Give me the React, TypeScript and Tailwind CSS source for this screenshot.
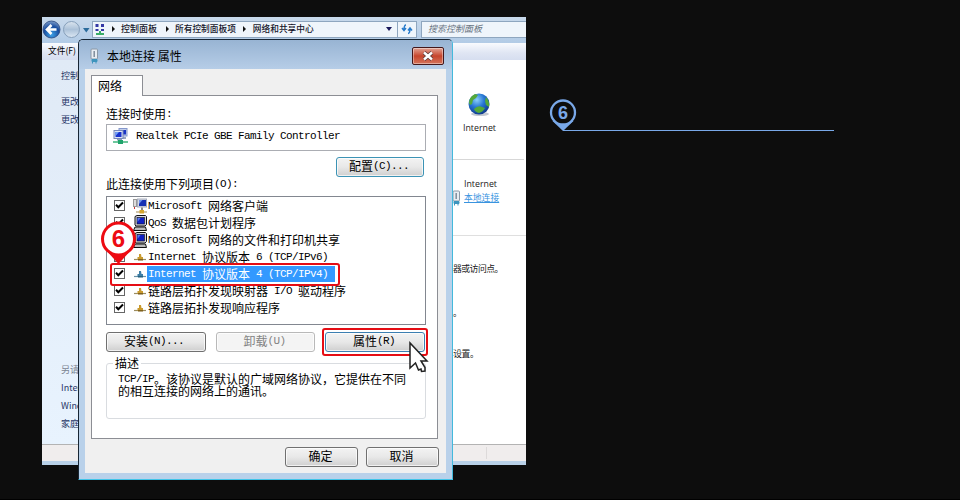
import React from "react";

const CJK = "font-['Noto_Sans_CJK_SC',sans-serif]";

function Song({ text, className = "" }: { text: string; className?: string }) {
  const runs = text.match(/[\x00-\x7f]+|[^\x00-\x7f]+/g) || [];
  return (
    <span className={`inline-flex whitespace-pre text-[12px] leading-[12px] ${className}`}>
      {runs.map((run, i) =>
        run.charCodeAt(0) < 128 ? (
          <span key={i} className="font-['Liberation_Mono',monospace] text-[11px] tracking-[-0.6px]">{run}</span>
        ) : (
          <span key={i} className="font-['Noto_Sans_CJK_SC',sans-serif]">{run}</span>
        )
      )}
    </span>
  );
}

function Button({ label, className = "" }: { label: string; className?: string }) {
  return (
    <button
      className={`flex h-[20px] items-center justify-center rounded-[3px] border bg-linear-to-b from-[#f3f3f3] via-[#e8e8e8] via-50% to-[#cfcfcf] pr-[2px] pb-[2px] inset-ring inset-ring-white/70 ${className}`}
    >
      <Song text={label} />
    </button>
  );
}

function PcIcon() {
  return (
    <svg width="15" height="16" viewBox="0 0 15 16">
      <rect x="6" y="0.5" width="8" height="7.5" fill="#c3cfea" stroke="#8497cc" />
      <rect x="7.5" y="2" width="5.5" height="4.5" fill="#1b35c4" />
      <path d="M10 9h3v2h-3z" fill="#9aa9c4" />
      <rect x="1" y="2.5" width="9" height="8" fill="#dde4f4" stroke="#7788b8" />
      <rect x="2.5" y="4" width="6" height="5" fill="#1932cf" />
      <path d="M2.500 4h3.500l-3.500 4z" fill="#6fa0f5" />
      <path d="M4 11h5v1.500H4z" fill="#8a9bb8" />
      <path d="M0 13h15v2H0z" fill="#6fc79d" />
      <rect x="5" y="12" width="5" height="4" fill="#1fa36b" />
    </svg>
  );
}

function ClientIcon() {
  return (
    <svg width="14" height="16" viewBox="0 0 14 16">
      <rect x="0.5" y="1.500" width="3" height="7" fill="#ddd" stroke="#999" />
      <path d="M1.500 9v2" stroke="#c33" />
      <rect x="4.5" y="1" width="9" height="8" fill="#d5d9e4" stroke="#a5abbc" />
      <rect x="6" y="2" width="7" height="6" fill="#1530b5" />
      <path d="M6 2h3.500l-3.500 4z" fill="#6f94ec" />
      <path d="M8 9.5h2v3H8z" fill="#888" />
      <path d="M3 13.5h11v1H3z" fill="#a08a55" />
      <rect x="6.500" y="12" width="4.500" height="3.5" fill="#d5a52d" />
    </svg>
  );
}

function ServiceIcon() {
  return (
    <svg width="14" height="16" viewBox="0 0 14 16">
      <path d="M2 1.500l2-1h8.500l1 1v8l-1.500 1.500h-9L2 10z" fill="#d4d4dc" stroke="#111" />
      <rect x="4" y="2.500" width="7.500" height="6.500" fill="#1020c4" stroke="#111" strokeWidth=".6" />
      <path d="M4.500 3h3l-3 4z" fill="#5579ee" />
      <path d="M2 12h10.500l1 3.500H0.500z" fill="#bbb" stroke="#111" />
    </svg>
  );
}

function ProtocolIcon({ blue = false }: { blue?: boolean }) {
  const c = blue ? "#3e7fa6" : "#c99a2e";
  return (
    <svg width="14" height="16" viewBox="0 0 14 16">
      <path d="M1 10.500h12" stroke={blue ? "#6b94a8" : "#9b8c60"} strokeWidth="1.200" />
      <path d="M6 5h2l.5 3H10v3H4.500V8H6z" fill={c} />
      <path d="M5 10h5v1.500H5z" fill={blue ? "#25617e" : "#80611c"} />
    </svg>
  );
}

function Check() {
  return (
    <span className="flex h-[11px] w-[11px] shrink-0 items-center justify-center border border-[#666] bg-white">
      <svg width="9" height="9" viewBox="0 0 9 9">
        <path d="M1 3.800L3.300 6.200 8 1.500" fill="none" stroke="#000" strokeWidth="2" />
      </svg>
    </span>
  );
}

const rows = [
  { text: "Microsoft 网络客户端", icon: "client" },
  { text: "QoS 数据包计划程序", icon: "service" },
  { text: "Microsoft 网络的文件和打印机共享", icon: "service" },
  { text: "Internet 协议版本 6 (TCP/IPv6)", icon: "protocol" },
  { text: "Internet 协议版本 4 (TCP/IPv4)", icon: "protocol", selected: true },
  { text: "链路层拓扑发现映射器 I/O 驱动程序", icon: "protocol" },
  { text: "链路层拓扑发现响应程序", icon: "protocol" },
];

function ItemList() {
  return (
    <div className="mt-[6px] h-[129px] w-[320px] border border-[#828790] bg-white">
      {rows.map((r) => (
        <div key={r.text} className="flex h-[17px] items-center pl-[7px]">
          <Check />
          <span className="ml-[8px] w-[14px]">
            {r.icon === "client" && <ClientIcon />}
            {r.icon === "service" && <ServiceIcon />}
            {r.icon === "protocol" && <ProtocolIcon blue={r.selected} />}
          </span>
          <span className={`flex h-[16px] items-center pl-px ${r.selected ? "w-[188px] bg-[#3399ff] text-white" : ""}`}>
            <Song text={r.text} />
          </span>
        </div>
      ))}
    </div>
  );
}

function PlugIcon() {
  return (
    <svg width="11" height="16" viewBox="0 0 11 16">
      <rect x="2" y="1" width="6.500" height="10" rx="1" fill="#e8edf2" stroke="#8b98a6" />
      <path d="M5.200 3v6" stroke="#7f8d9b" strokeWidth="1.500" />
      <path d="M3 11.500h5v2H3zM3.500 13v2.500M7 13v2.500" fill="#3d94bd" stroke="#3d94bd" />
    </svg>
  );
}

function Dialog() {
  return (
    <section className="absolute left-[78px] top-[39px] flex h-[441px] w-[375px] flex-col rounded-t-[5px] border border-t-[#182634] border-r-[#43b9dc] border-b-[#40c4e8] border-l-[#182634] bg-[#b9d1ea] text-black">
      <header className="flex h-[29px] shrink-0 items-center rounded-t-[4px] bg-linear-to-b from-[#98b4d3] to-[#b6cde7] pr-[8px] pl-[10px] pt-[3px]">
        <PlugIcon />
        <span className={`ml-[7px] text-[12px] leading-[14px] ${CJK}`}>本地连接 属性</span>
        <span className="ml-auto flex h-[18px] w-[32px] items-center justify-center rounded-[2px] border border-[#43171a] bg-linear-to-b from-[#e0a294] via-[#c6442c] via-50% to-[#d4735a] inset-ring inset-ring-white/40">
          <svg width="12" height="10" viewBox="0 0 12 10">
            <path d="M2 1.500l8 7M10 1.500l-8 7" stroke="#583b3b" strokeWidth="4" />
            <path d="M2 1.500l8 7M10 1.500l-8 7" stroke="#fff" strokeWidth="2.400" />
          </svg>
        </span>
      </header>
      <div className="ml-[6px] flex h-[404px] w-[361px] flex-col bg-[#f0f0f0] pt-[6px] pl-[6px]">
        <div className="z-10 -mb-px flex h-[21px] w-[52px] shrink-0 items-center border border-b-0 border-[#8c8e94] bg-white pb-px pl-[6px]">
          <Song text="网络" />
        </div>
        <div className="h-[344px] w-[347px] shrink-0 border border-[#8c8e94] bg-white pt-[12px] pl-[14px]">
          <div className="flex h-[12px] items-center"><Song text="连接时使用:" /></div>
          <div className="mt-[4px] flex h-[27px] w-[320px] items-center border border-[#abadb3] pl-[6px] pb-[4px]">
            <PcIcon />
            <Song text="Realtek PCIe GBE Family Controller" className="ml-[8px]" />
          </div>
          <Button label="配置(C)..." className="mt-[6px] ml-[230px] w-[88px] border-[#3c93b5] inset-ring-[#9bdcf0]" />
          <div className="mt-[1px] flex h-[12px] items-center"><Song text="此连接使用下列项目(O):" /></div>
          <ItemList />
          <div className="mt-[7px] flex gap-[10px]">
            <Button label="安装(N)..." className="w-[100px] border-[#707070] pr-[4px]" />
            <Button label="卸载(U)" className="w-[99px] border-[#b9b9b9] from-[#f4f4f4] via-[#f4f4f4] to-[#f4f4f4] text-[#838383]" />
            <Button label="属性(R)" className="w-[100px] border-[#3c7fb1] from-[#e9f5fc] via-[#d3ecf9] to-[#9dd1ee]" />
          </div>
          <fieldset className="mt-[5px] h-[62px] w-[320px] rounded-[3px] border border-[#d9dce0] pl-[11px]">
            <legend className="-ml-[5px] flex h-[12px] items-center px-[2px]"><Song text="描述" /></legend>
            <div className="mt-[4px] flex flex-col">
              <Song text="TCP/IP。该协议是默认的广域网络协议，它提供在不同" />
              <Song text="的相互连接的网络上的通讯。" />
            </div>
          </fieldset>
        </div>
        <div className="mt-[8px] ml-[194px] flex gap-[8px]">
          <Button label="确定" className="w-[73px] border-[#707070]" />
          <Button label="取消" className="w-[73px] border-[#707070]" />
        </div>
      </div>
    </section>
  );
}

function AddressBar() {
  return (
    <div className="flex h-[26px] shrink-0 items-center bg-linear-to-b from-[#c8d9eb] to-[#b2cbe6] pb-[2px]">
      <svg width="49" height="24" viewBox="0 0 49 24">
        <defs>
          <radialGradient id="back" cx=".5" cy=".8" r=".8">
            <stop offset="0" stopColor="#3ea1e6" />
            <stop offset=".6" stopColor="#174b9e" />
            <stop offset="1" stopColor="#809fca" />
          </radialGradient>
          <linearGradient id="fwd" x2="0" y2="1">
            <stop offset="0" stopColor="#dbe5ef" />
            <stop offset=".5" stopColor="#abc1d8" />
            <stop offset="1" stopColor="#dce8f4" />
          </linearGradient>
        </defs>
        <circle cx="9.500" cy="12.500" r="8.500" fill="url(#back)" stroke="#27447b" strokeWidth=".8" />
        <path d="M14.500 12.500H5.500M9.500 8L5 12.500 9.500 17" fill="none" stroke="#fff" strokeWidth="2.600" />
        <circle cx="29.500" cy="12.500" r="8" fill="url(#fwd)" stroke="#869fba" />
        <path d="M41 11h6.500l-3.200 4.500z" fill="#2b6b9b" />
      </svg>
      <div className="ml-px flex h-[17px] w-[306px] shrink-0 items-center border border-[#8ea6bf] bg-[#eff5fb] pl-[2px] text-[9px] font-medium text-[#15152a]">
        <svg width="10" height="12" viewBox="0 0 10 12">
          <path d="M.5 1h3v3h-3zM6 1h3v3H6zM.5 6h3v2h-3zM6 6h3v2H6z" fill="#3438a5" />
          <path d="M1 10h8v2H1zM4 8h2v2H4z" fill="#3aad68" />
        </svg>
        <i className="ml-[7px] border-y-[3px] border-l-[3px] border-y-transparent border-l-[#111]" />
        <span className={`ml-[6px] pb-px ${CJK}`}>控制面板</span>
        <i className="ml-[9px] border-y-[3px] border-l-[3px] border-y-transparent border-l-[#111]" />
        <span className={`ml-[6px] pb-px text-[8.700px] ${CJK}`}>所有控制面板项</span>
        <i className="ml-[7px] border-y-[3px] border-l-[3px] border-y-transparent border-l-[#111]" />
        <span className={`ml-[7px] pb-px text-[8.700px] ${CJK}`}>网络和共享中心</span>
        <i className="mr-[5px] ml-auto border-x-[3px] border-t-[4px] border-x-transparent border-t-[#19195b]" />
      </div>
      <div className="-ml-px flex h-[17px] w-[20px] shrink-0 items-center justify-center border border-[#8ea6bf] bg-[#eff5fb]">
        <svg width="12" height="12" viewBox="0 0 12 12" fill="none" stroke="#287bcb" strokeWidth="1.500">
          <path d="M5 2Q3 2 3 7M1 5l2 2.500L5 5M7 10.500q2 0 2-5.500M7 7.500L9 5l2 2.500" />
        </svg>
      </div>
      <div className={`ml-[4px] flex h-[17px] grow items-center border border-r-0 border-[#8ea6bf] bg-[#eff5fb] pb-px pl-[6px] text-[9px] text-[#687380] italic ${CJK}`}>搜索控制面板</div>
    </div>
  );
}

function Globe() {
  return (
    <svg width="24" height="25" viewBox="0 0 24 25">
      <defs>
        <radialGradient id="globe" cx=".4" cy=".3" r=".7">
          <stop offset="0" stopColor="#8bd0fa" />
          <stop offset=".5" stopColor="#2877d4" />
          <stop offset="1" stopColor="#103d90" />
        </radialGradient>
      </defs>
      <ellipse cx="13" cy="22" rx="9" ry="2" fill="#c3c9d1" />
      <circle cx="12" cy="12" r="10.500" fill="url(#globe)" />
      <path d="M2 11Q2 5 8 2l3 1-2 3-3 2-1 4-2 1zM7 17q4-4 8-2l3 1q-2 4-6 5-4-1-5-4zM19 5q4 5 3 10l-3-2-1-4z" fill="#54a93a" />
    </svg>
  );
}

function BackWindow() {
  return (
    <section className={`absolute left-[42px] top-[17px] flex h-[448px] w-[484px] flex-col overflow-hidden bg-[#b9d1e8] ${CJK}`}>
      <AddressBar />
      <div className="flex h-[17px] shrink-0 items-center bg-linear-to-b from-[#f9fbfe] via-[#dfe5f3] via-60% to-[#d6def0] pb-px pl-[6px] text-[8.700px] text-black">文件(F)</div>
      <div className="flex h-[384px] shrink-0">
        <nav className="flex w-[60px] flex-col bg-linear-to-b from-[#e0eaf6] to-[#e8f3fe] pl-[19px] text-[9px] leading-[18px] whitespace-nowrap text-[#263566]">
          <span className="mt-[7px]">控制面板主页</span>
          <span className="mt-[8px]">更改适配器设置</span>
          <span>更改高级共享设置</span>
          <span className="mt-[232px] text-[#7b8492]">另请参阅</span>
          <span>Internet 选项</span>
          <span>Windows 防火墙</span>
          <span>家庭组</span>
        </nav>
        <main className="flex grow flex-col bg-white pl-[351px] text-[8.800px] leading-[12px] whitespace-nowrap text-[#202020]">
          <div className="mt-[32px] ml-[14px] h-[25px]"><Globe /></div>
          <div className="mt-[5px] ml-[10px] font-['Open_Sans',sans-serif] text-[8.800px]">Internet</div>
          <div className="mt-[25px] mr-[2px] h-px bg-[#d7d7d7]" />
          <div className="mt-[18px] ml-[11px] font-['Open_Sans',sans-serif] text-[8.800px]">Internet</div>
          <div className="mt-[2px] flex h-[12px] items-center text-[#3994df]">
            <span className="-ml-[2px] w-[13px]"><PlugIcon /></span><span className="underline">本地连接</span>
          </div>
          <div className="mt-[31px] h-px bg-[#dfdfdf]" />
          <div className="mt-[27px] tracking-[-0.5px]">器或访问点。</div>
          <div className="mt-[32px]">。</div>
          <div className="mt-[29px] flex tracking-[-0.5px]"><span className="-ml-[8px]">享设置。</span></div>
        </main>
      </div>
      <footer className="flex h-[17px] shrink-0 border-t border-[#b3b3b3] bg-[#f0eded]">
        <span className="my-[2px] w-[445px] border-r border-[#dddada]" />
      </footer>
    </section>
  );
}

export default function App() {
  return (
    <div className="relative h-[500px] w-[960px] overflow-hidden bg-[#0d0d0d]">
      <BackWindow />
      <Dialog />
      <div className="absolute left-[110px] top-[263px] h-[23px] w-[230px] rounded-[3px] border-2 border-[#e50d14]" />
      <div className="absolute left-[322px] top-[328px] h-[28px] w-[106px] rounded-[3px] border-2 border-[#e50d14]" />
      <svg className="absolute left-[100px] top-[220px]" width="38" height="45" viewBox="0 0 38 45">
        <path d="M5 29L18.500 44 32 29z" fill="#ed0b12" />
        <circle cx="18.500" cy="19" r="16" fill="#fff" stroke="#ed0b12" strokeWidth="3" />
        <text x="18.500" y="27" textAnchor="middle" fontFamily="Liberation Sans, sans-serif" fontSize="24" fontWeight="700" fill="#ed0b12">6</text>
      </svg>
      <svg className="absolute left-[408px] top-[340px]" width="22" height="34" viewBox="0 0 22 34">
        <path d="M2 3v25l5.500-5 3 7 2.500-1 .5 2.500 3.500-.5v-3.500l-4-6.500h6z" fill="#fff" stroke="#222" strokeWidth="1.500" />
      </svg>
      <svg className="absolute left-[548px] top-[97px]" width="288" height="36" viewBox="0 0 288 36">
        <path d="M15 33.500h271" stroke="#79a8e8" />
        <path d="M4.500 24L15 34l10.500-10z" fill="#79a8e8" />
        <circle cx="15" cy="15.500" r="12" fill="#0d0d0d" stroke="#79a8e8" strokeWidth="2.300" />
        <text x="15" y="22" textAnchor="middle" fontFamily="Liberation Sans, sans-serif" fontSize="18" fontWeight="700" fill="#79a8e8">6</text>
      </svg>
      <div className="absolute bottom-0 left-0 h-px w-full bg-black" />
    </div>
  );
}
